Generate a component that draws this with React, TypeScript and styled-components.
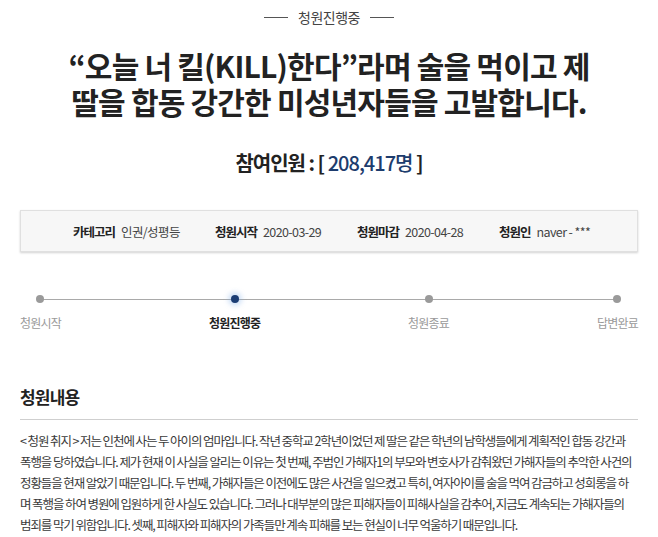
import styled, { createGlobalStyle } from "styled-components";

const Global = createGlobalStyle`
  html, body {
    margin: 0;
    padding: 0;
    background: #ffffff;
  }
  body {
    font-family: "Noto Sans CJK KR", "Noto Sans", sans-serif;
    color: #222;
  }
`;

const Page = styled.div`
  width: 658px;
  padding: 8px 20px 0;
  box-sizing: border-box;
`;

const Status = styled.div`
  display: flex;
  justify-content: center;
  align-items: center;
  gap: 10px;
  font-size: 14px;
  line-height: 18px;
  color: #444;
  letter-spacing: -0.5px;
`;

const Dash = styled.span`
  width: 24px;
  height: 1px;
  background: #555;
`;

const Title = styled.h1`
  margin: 21px 0 0;
  text-align: center;
  font-size: 30px;
  line-height: 36px;
  font-weight: 700;
  letter-spacing: -0.8px;
  color: #222;
`;

const TitleLine = styled.span`
  display: block;
  white-space: nowrap;
`;

const Count = styled.div`
  margin-top: 30px;
  text-align: center;
  font-size: 20px;
  line-height: 28px;
  font-weight: 700;
  letter-spacing: -1px;
  color: #222;
`;

const Number = styled.span`
  color: #1d3c6d;
  font-weight: 500;
`;

const InfoBar = styled.div`
  margin-top: 33px;
  height: 42px;
  box-sizing: border-box;
  display: grid;
  grid-template-columns: repeat(4, 142px);
  align-items: center;
  padding-left: 52px;
  background: #f7f7f7;
  border: 1px solid #e0e0e0;
  box-shadow: 0 1px 2px rgba(0, 0, 0, 0.18);
`;

const InfoItem = styled.div`
  display: flex;
  align-items: baseline;
  gap: 6px;
  font-size: 12.5px;
  white-space: nowrap;
`;

const InfoLabel = styled.span`
  font-weight: 700;
  color: #222;
  letter-spacing: -1px;
`;

const InfoValue = styled.span`
  color: #444;
  letter-spacing: -0.6px;
`;

const Steps = styled.div`
  position: relative;
  margin-top: 43px;
  display: flex;
  justify-content: space-between;

  &::before {
    content: "";
    position: absolute;
    left: 20px;
    right: 20px;
    top: 4px;
    height: 1px;
    background: #a9a9a9;
  }
`;

const Step = styled.div`
  position: relative;
  display: flex;
  flex-direction: column;
  align-items: center;
  gap: 12px;
`;

const Dot = styled.span<{ $active?: boolean }>`
  width: 8px;
  height: 8px;
  border-radius: 50%;
  background: ${(p) => (p.$active ? "#1b3d74" : "#9a9a9a")};
  box-shadow: ${(p) =>
    p.$active ? "0 0 5px 3px rgba(120, 170, 230, 0.35)" : "none"};
`;

const StepLabel = styled.span<{ $active?: boolean }>`
  font-size: 12px;
  line-height: 16px;
  letter-spacing: -0.8px;
  font-weight: ${(p) => (p.$active ? 700 : 400)};
  color: ${(p) => (p.$active ? "#222" : "#9a9a9a")};
`;

const SectionTitle = styled.h2`
  margin: 54px 0 0;
  padding-bottom: 10px;
  font-size: 17px;
  line-height: 24px;
  font-weight: 700;
  letter-spacing: -0.8px;
  color: #222;
  border-bottom: 1px solid #cfcfcf;
`;

const Body = styled.div`
  padding-top: 10px;
  font-size: 12.5px;
  line-height: 21px;
  color: #3a3a3a;
  letter-spacing: -1.1px;
`;

const BodyLine = styled.div`
  white-space: nowrap;
`;

const info = [
  { label: "카테고리", value: "인권/성평등" },
  { label: "청원시작", value: "2020-03-29" },
  { label: "청원마감", value: "2020-04-28" },
  { label: "청원인", value: "naver - ***" },
];

const steps = [
  { label: "청원시작" },
  { label: "청원진행중", active: true },
  { label: "청원종료" },
  { label: "답변완료" },
];

const lines = [
  "< 청원 취지 > 저는 인천에 사는 두 아이의 엄마입니다. 작년 중학교 2학년이었던 제 딸은 같은 학년의 남학생들에게 계획적인 합동 강간과",
  "폭행을 당하였습니다. 제가 현재 이 사실을 알리는 이유는 첫 번째, 주범인 가해자1의 부모와 변호사가 감춰왔던 가해자들의 추악한 사건의",
  "정황들을 현재 알았기 때문입니다. 두 번째, 가해자들은 이전에도 많은 사건을 일으켰고 특히, 여자아이를 술을 먹여 감금하고 성희롱을 하",
  "며 폭행을 하여 병원에 입원하게 한 사실도 있습니다. 그러나 대부분의 많은 피해자들이 피해사실을 감추어, 지금도 계속되는 가해자들의",
  "범죄를 막기 위함입니다. 셋째, 피해자와 피해자의 가족들만 계속 피해를 보는 현실이 너무 억울하기 때문입니다.",
];

export default function App() {
  return (
    <>
      <Global />
      <Page>
        <Status>
          <Dash />
          청원진행중
          <Dash />
        </Status>
        <Title>
          <TitleLine>“오늘 너 킬(KILL)한다”라며 술을 먹이고 제</TitleLine>
          <TitleLine>딸을 합동 강간한 미성년자들을 고발합니다.</TitleLine>
        </Title>
        <Count>
          참여인원 : [ <Number>208,417명</Number> ]
        </Count>
        <InfoBar>
          {info.map((i) => (
            <InfoItem key={i.label}>
              <InfoLabel>{i.label}</InfoLabel>
              <InfoValue>{i.value}</InfoValue>
            </InfoItem>
          ))}
        </InfoBar>
        <Steps>
          {steps.map((s) => (
            <Step key={s.label}>
              <Dot $active={s.active} />
              <StepLabel $active={s.active}>{s.label}</StepLabel>
            </Step>
          ))}
        </Steps>
        <SectionTitle>청원내용</SectionTitle>
        <Body>
          {lines.map((l, i) => (
            <BodyLine key={i}>{l}</BodyLine>
          ))}
        </Body>
      </Page>
    </>
  );
}
